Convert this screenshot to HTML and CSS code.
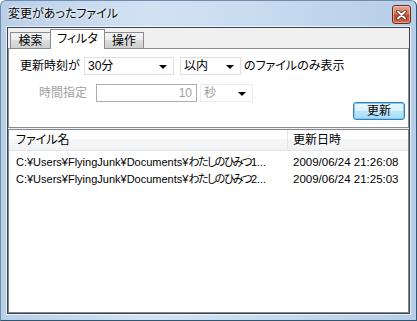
FILE: index.html
```html
<!DOCTYPE html>
<html lang="ja">
<head>
    <meta charset="UTF-8">
    <title>変更があったファイル</title>
    <link rel="stylesheet" href="styles.css">
</head>
<body>
    <div class="window">
        <div class="titlebar">
            <span class="title">変更があったファイル</span>
            <button class="close-button" aria-label="閉じる">
                <svg width="11" height="10" viewBox="0 0 11 10">
                    <path d="M2 1.5 L9 8.5 M9 1.5 L2 8.5" stroke="#5a2418" stroke-width="3.6" stroke-linecap="round"/>
                    <path d="M2 1.5 L9 8.5 M9 1.5 L2 8.5" stroke="#ffffff" stroke-width="2" stroke-linecap="round"/>
                </svg>
            </button>
        </div>

        <div class="client">
            <div class="tabs">
                <div class="tab tab-search">検索</div>
                <div class="tab tab-filter active">フィルタ</div>
                <div class="tab tab-action">操作</div>
            </div>

            <div class="panel">
                <div class="row">
                    <span class="label">更新時刻が</span>
                    <div class="combo combo-time"><span>30分</span><i class="arrow"></i></div>
                    <div class="combo combo-range"><span>以内</span><i class="arrow"></i></div>
                    <span class="suffix">のファイルのみ表示</span>
                </div>
                <div class="row row-custom">
                    <span class="label label-disabled">時間指定</span>
                    <div class="textbox">10</div>
                    <div class="combo combo-unit disabled"><span>秒</span><i class="arrow"></i></div>
                </div>
                <div class="button-row">
                    <button class="button">更新</button>
                </div>
            </div>

            <div class="listview">
                <div class="list-header">
                    <div class="col col-name">ファイル名</div>
                    <div class="col col-date">更新日時</div>
                </div>
                <div class="list-body">
                    <div class="list-row">
                        <div class="col col-name">C:¥Users¥FlyingJunk¥Documents¥<span class="kana">わたしのひみつ</span>1...</div>
                        <div class="col col-date">2009/06/24 21:26:08</div>
                    </div>
                    <div class="list-row">
                        <div class="col col-name">C:¥Users¥FlyingJunk¥Documents¥<span class="kana">わたしのひみつ</span>2...</div>
                        <div class="col col-date">2009/06/24 21:25:03</div>
                    </div>
                </div>
            </div>
        </div>
    </div>
</body>
</html>
```

FILE: styles.css
```css
* {
    margin: 0;
    padding: 0;
    box-sizing: border-box;
}

body {
    font-family: "Liberation Sans", "Noto Sans CJK JP", sans-serif;
    font-size: 12px;
    line-height: 14px;
    font-feature-settings: "palt";
    color: #000;
    background: #fff;
}

/* Cadre de la fenêtre */
.window {
    width: 417px;
    height: 321px;
    display: flex;
    flex-direction: column;
    background: linear-gradient(90deg, #b8cfe8 0%, #d2e2f3 35%, #c9dcf0 60%, #b6cee8 100%);
    border: 1px solid #6f8dab;
    border-right-color: #2e5873;
    border-bottom-color: #2e5873;
    border-radius: 6px 6px 0 0;
}

.titlebar {
    height: 26px;
    display: flex;
    align-items: center;
    padding-left: 7px;
}

.title {
    font-size: 12px;
    text-shadow: 0 0 4px #fff, 0 0 2px #fff;
}

.close-button {
    margin-left: auto;
    margin-right: 5px;
    align-self: flex-start;
    margin-top: 4px;
    width: 19px;
    height: 19px;
    border: 1px solid #6b2a1e;
    border-radius: 3px;
    background: linear-gradient(#e8a995 0%, #d47861 45%, #c24a2e 55%, #cf6a48 100%);
    box-shadow: inset 0 0 0 1px rgba(255, 220, 200, 0.5);
    display: flex;
    align-items: center;
    justify-content: center;
}

.client {
    flex: 1;
    margin: 0 6px 6px;
    border: 1px solid #3c434b;
    box-shadow: 0 0 0 1px rgba(255, 255, 255, 0.7);
    background: #f0f0f0;
    display: flex;
    flex-direction: column;
}

/* Onglets */
.tabs {
    display: flex;
    align-items: flex-end;
    height: 21px;
    padding-left: 2px;
    margin-bottom: -1px;
    position: relative;
    z-index: 1;
}

.tab {
    height: 17px;
    border: 1px solid #898c95;
    background: linear-gradient(#f3f3f3 0%, #ebebeb 50%, #dddddd 50%, #cfcfcf 100%);
    display: flex;
    align-items: center;
    justify-content: center;
}

.tab-search {
    width: 41px;
}

.tab-filter {
    width: 55px;
    margin-left: -1px;
}

.tab-action {
    width: 40px;
    margin-left: -1px;
}

.tab.active {
    height: 20px;
    background: #fff;
    border-bottom: none;
    padding-bottom: 2px;
}

/* Panneau du filtre */
.panel {
    height: 80px;
    border: 1px solid #898c95;
    background: #fff;
    padding: 8px 0 0 11px;
}

.row {
    display: flex;
    align-items: center;
    height: 18px;
}

.row-custom {
    margin-top: 9px;
}

.label {
    width: 64px;
}

.label-disabled {
    width: 76px;
    text-align: right;
    padding-right: 9px;
    color: #a0a0a0;
}

.combo {
    height: 18px;
    border: 1px solid #dde1e6;
    background: #fff;
    position: relative;
    padding-left: 3px;
    display: flex;
    align-items: center;
}

.combo-time {
    width: 90px;
}

.combo-range {
    width: 61px;
    margin-left: 6px;
}

.combo-unit {
    width: 53px;
    margin-left: 3px;
}

.combo.disabled {
    color: #a0a0a0;
    border-color: #ececec;
}

.arrow {
    position: absolute;
    right: 6px;
    top: 7px;
    border-left: 4px solid transparent;
    border-right: 4px solid transparent;
    border-top: 4px solid #000;
}

.suffix {
    margin-left: 3px;
}

.textbox {
    width: 101px;
    height: 18px;
    border: 1px solid #adadad;
    background: #fff;
    color: #a0a0a0;
    text-align: right;
    padding-right: 4px;
    line-height: 16px;
}

.button-row {
    display: flex;
    justify-content: flex-end;
    padding-right: 3px;
}

.button {
    width: 52px;
    height: 18px;
    font: inherit;
    border: 1px solid #3c7fb1;
    border-radius: 3px;
    background: linear-gradient(#eaf6fd 0%, #d9f0fc 50%, #bee6fd 50%, #a7d9f5 100%);
    box-shadow: inset 0 0 0 1px #76cff3;
}

/* Liste des fichiers */
.listview {
    flex: 1;
    margin-top: 1px;
    border: 1px solid #828790;
    background: #fff;
}

.list-header {
    display: flex;
    height: 21px;
    border-bottom: 1px solid #e5e5e5;
    background: linear-gradient(#ffffff 0%, #ffffff 45%, #f6f7f8 45%, #f1f2f4 100%);
}

.list-header .col {
    display: flex;
    align-items: center;
}

.col-name {
    width: 279px;
    padding-left: 7px;
    white-space: nowrap;
    overflow: hidden;
}

.list-header .col-name {
    border-right: 1px solid #e3e5e8;
}

.col-date {
    flex: 1;
    padding-left: 5px;
    white-space: nowrap;
}

.list-body {
    padding-top: 2px;
}

.list-row {
    display: flex;
    height: 17px;
    align-items: center;
    font-size: 11px;
}

.list-row .col-date {
    font-size: 11.5px;
}

/* les kana de MS UI Gothic sont plus étroits */
.kana {
    letter-spacing: -1.5px;
}
```
